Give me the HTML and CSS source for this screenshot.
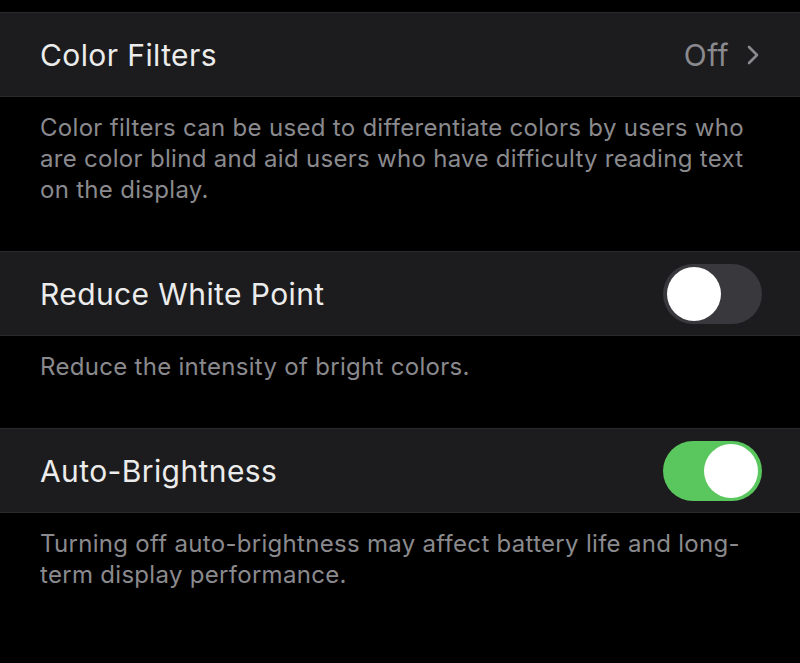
FILE: index.html
```html
<!DOCTYPE html>
<html>
<head>
<meta charset="utf-8">
<link rel="stylesheet" href="styles.css">
</head>
<body>
<div class="page">
  <div class="row">
    <span class="title">Color Filters</span>
    <span class="value">Off
      <svg class="chev" width="14" height="24" viewBox="0 0 14 24"><path d="M3 4 L11 12 L3 20" fill="none" stroke="#8a8a8e" stroke-width="2.6" stroke-linecap="round" stroke-linejoin="round"/></svg>
    </span>
  </div>
  <p class="desc">Color filters can be used to differentiate colors by users who are color blind and aid users who have difficulty reading text on the display.</p>

  <div class="row">
    <span class="title">Reduce White Point</span>
    <span class="toggle"><span class="knob"></span></span>
  </div>
  <p class="desc">Reduce the intensity of bright colors.</p>

  <div class="row">
    <span class="title">Auto-Brightness</span>
    <span class="toggle on"><span class="knob"></span></span>
  </div>
  <p class="desc">Turning off auto-brightness may affect battery life and long-term display performance.</p>
</div>
</body>
</html>
```

FILE: styles.css
```css
html, body {
  margin: 0;
  padding: 0;
  background: #000;
}
.page {
  padding-top: 12px;
  font-family: Inter, "Noto Sans", sans-serif;
}
.row {
  height: 83px;
  background: #1c1c1e;
  border-top: 1px solid #2a2a2c;
  border-bottom: 1px solid #2a2a2c;
  display: flex;
  align-items: center;
  justify-content: space-between;
  padding: 0 38px 0 40px;
}
.title {
  color: #ececec;
  font-size: 30px;
  letter-spacing: 0.4px;
}
.value {
  color: #8a8a8e;
  font-size: 30px;
  letter-spacing: 0.4px;
  display: flex;
  align-items: center;
  gap: 17px;
  margin-right: 2px;
}
.desc {
  margin: 0;
  padding: 15px 48px 46px 40px;
  color: #8a8a8e;
  font-size: 24px;
  letter-spacing: 0.3px;
  line-height: 31px;
}
.toggle {
  width: 99px;
  height: 60px;
  border-radius: 30px;
  background: #39393d;
  display: flex;
  align-items: center;
  padding: 0 4px;
  box-sizing: border-box;
}
.knob {
  width: 54px;
  height: 54px;
  border-radius: 50%;
  background: #fff;
}
.toggle.on {
  background: #5ac65e;
  justify-content: flex-end;
}
```
